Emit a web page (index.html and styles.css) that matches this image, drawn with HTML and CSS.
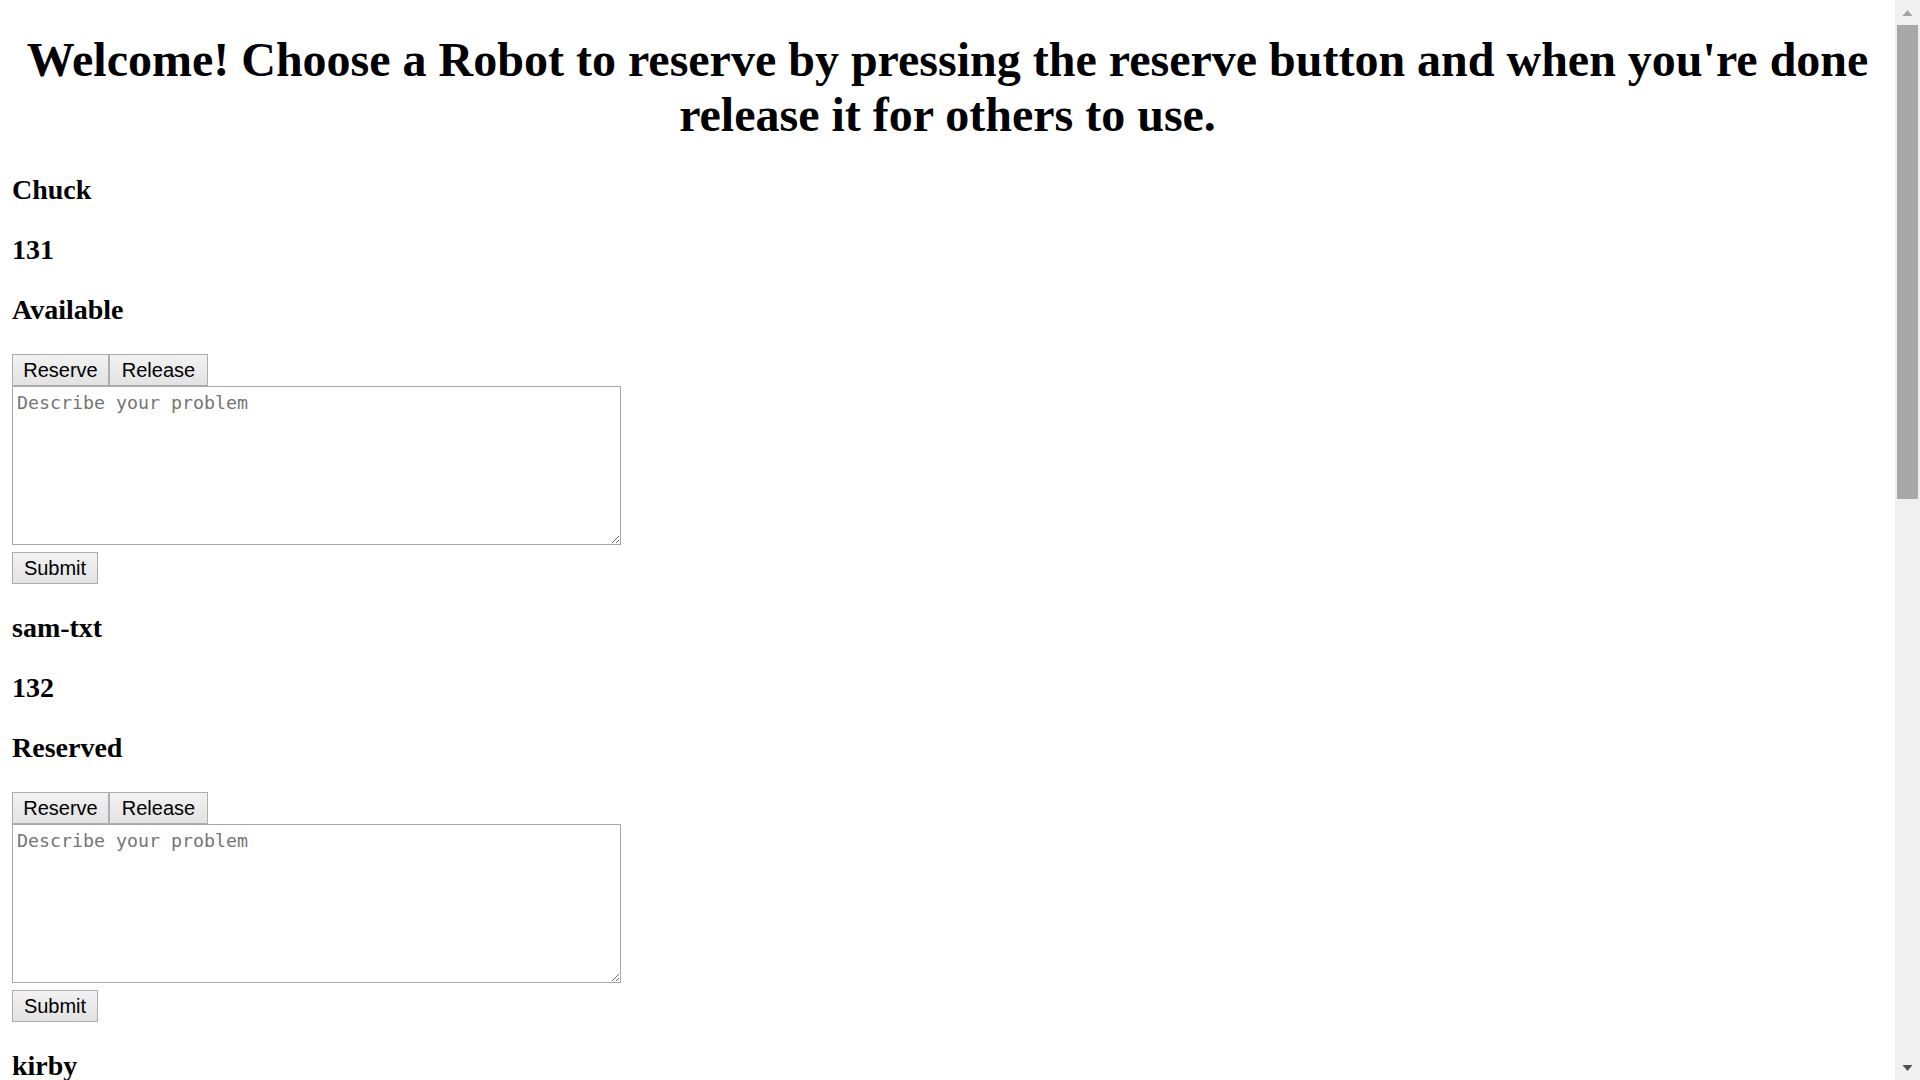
FILE: index.html
```html
<!DOCTYPE html>
<html lang="en">
<head>
<meta charset="utf-8">
<title>Robot Reservation</title>
<link rel="stylesheet" href="styles.css">
</head>
<body>
<h1 class="title">Welcome! Choose a Robot to reserve by pressing the reserve button and when you're done release it for others to use.</h1>

<section class="robot">
  <h3 class="robot-line">Chuck</h3>
  <h3 class="robot-line">131</h3>
  <h3 class="robot-line">Available</h3>
  <div class="actions"><button class="btn btn-reserve">Reserve</button><button class="btn btn-release">Release</button></div>
  <textarea class="problem" placeholder="Describe your problem"></textarea>
  <button class="btn submit">Submit</button>
</section>

<section class="robot">
  <h3 class="robot-line">sam-txt</h3>
  <h3 class="robot-line">132</h3>
  <h3 class="robot-line">Reserved</h3>
  <div class="actions"><button class="btn btn-reserve">Reserve</button><button class="btn btn-release">Release</button></div>
  <textarea class="problem" placeholder="Describe your problem"></textarea>
  <button class="btn submit">Submit</button>
</section>

<section class="robot">
  <h3 class="robot-line">kirby</h3>
  <h3 class="robot-line">133</h3>
  <h3 class="robot-line">Available</h3>
  <div class="actions"><button class="btn btn-reserve">Reserve</button><button class="btn btn-release">Release</button></div>
  <textarea class="problem" placeholder="Describe your problem"></textarea>
  <button class="btn submit">Submit</button>
</section>

<section class="robot">
  <h3 class="robot-line">dot</h3>
  <h3 class="robot-line">134</h3>
  <h3 class="robot-line">Available</h3>
  <div class="actions"><button class="btn btn-reserve">Reserve</button><button class="btn btn-release">Release</button></div>
  <textarea class="problem" placeholder="Describe your problem"></textarea>
  <button class="btn submit">Submit</button>
</section>

<section class="robot">
  <h3 class="robot-line">pixel</h3>
  <h3 class="robot-line">135</h3>
  <h3 class="robot-line">Available</h3>
  <div class="actions"><button class="btn btn-reserve">Reserve</button><button class="btn btn-release">Release</button></div>
  <textarea class="problem" placeholder="Describe your problem"></textarea>
  <button class="btn submit">Submit</button>
</section>

<aside class="scrollbar" aria-hidden="true">
  <div class="sb-arrow sb-up"><svg width="25" height="25" viewBox="0 0 25 25"><polygon points="7.5,16 17.5,16 12.5,10" fill="#a3a3a3"/></svg></div>
  <div class="sb-track"><div class="sb-thumb"></div></div>
  <div class="sb-arrow sb-down"><svg width="25" height="25" viewBox="0 0 25 25"><polygon points="7.5,10 17.5,10 12.5,16" fill="#505050"/></svg></div>
</aside>
</body>
</html>
```

FILE: styles.css
```css
html {
  background: #ffffff;
}

body {
  margin: 0 37px 12px 12px;
  padding: 0;
  font-family: "Liberation Serif", "Times New Roman", serif;
  font-size: 24px;
  color: #000000;
}

.title {
  font-family: "Liberation Serif", "Times New Roman", serif;
  font-size: 48px;
  font-weight: bold;
  text-align: center;
  margin: 32px 0;
  line-height: normal;
}

.robot {
  display: block;
}

.robot-line {
  font-family: "Liberation Serif", "Times New Roman", serif;
  font-size: 28px;
  font-weight: bold;
  margin: 28px 0;
  line-height: normal;
}

.actions {
  display: flex;
  margin-top: 1px;
}

.btn {
  font-family: "Liberation Sans", Arial, sans-serif;
  font-size: 20px;
  color: #000000;
  height: 32px;
  box-sizing: border-box;
  padding: 0;
  margin: 0;
  border: 1px solid #adadad;
  border-radius: 0;
  background: linear-gradient(#f2f2f2, #e2e2e2);
  line-height: 1;
  text-align: center;
}

.btn-reserve {
  width: 97px;
}

.btn-release {
  width: 99px;
}

.problem {
  display: block;
  box-sizing: border-box;
  width: 609px;
  height: 159px;
  margin: 0 0 7px 0;
  padding: 5px 4px;
  border: 1px solid #a9a9a9;
  border-radius: 0;
  font-family: "DejaVu Sans Mono", "Liberation Mono", monospace;
  font-size: 18.3px;
  line-height: 1.15;
  color: #000000;
  background: #ffffff;
}

.problem::placeholder {
  color: #757575;
}

.submit {
  display: block;
  width: 86px;
}

.scrollbar {
  position: fixed;
  top: 0;
  right: 0;
  width: 25px;
  height: 100vh;
  background: #f0f0f0;
  display: flex;
  flex-direction: column;
}

.sb-arrow {
  height: 25px;
  flex: 0 0 25px;
}

.sb-arrow svg {
  display: block;
}

.sb-track {
  flex: 1;
  padding: 0 2px;
}

.sb-thumb {
  height: 474px;
  background: #a8a8a8;
}
```
